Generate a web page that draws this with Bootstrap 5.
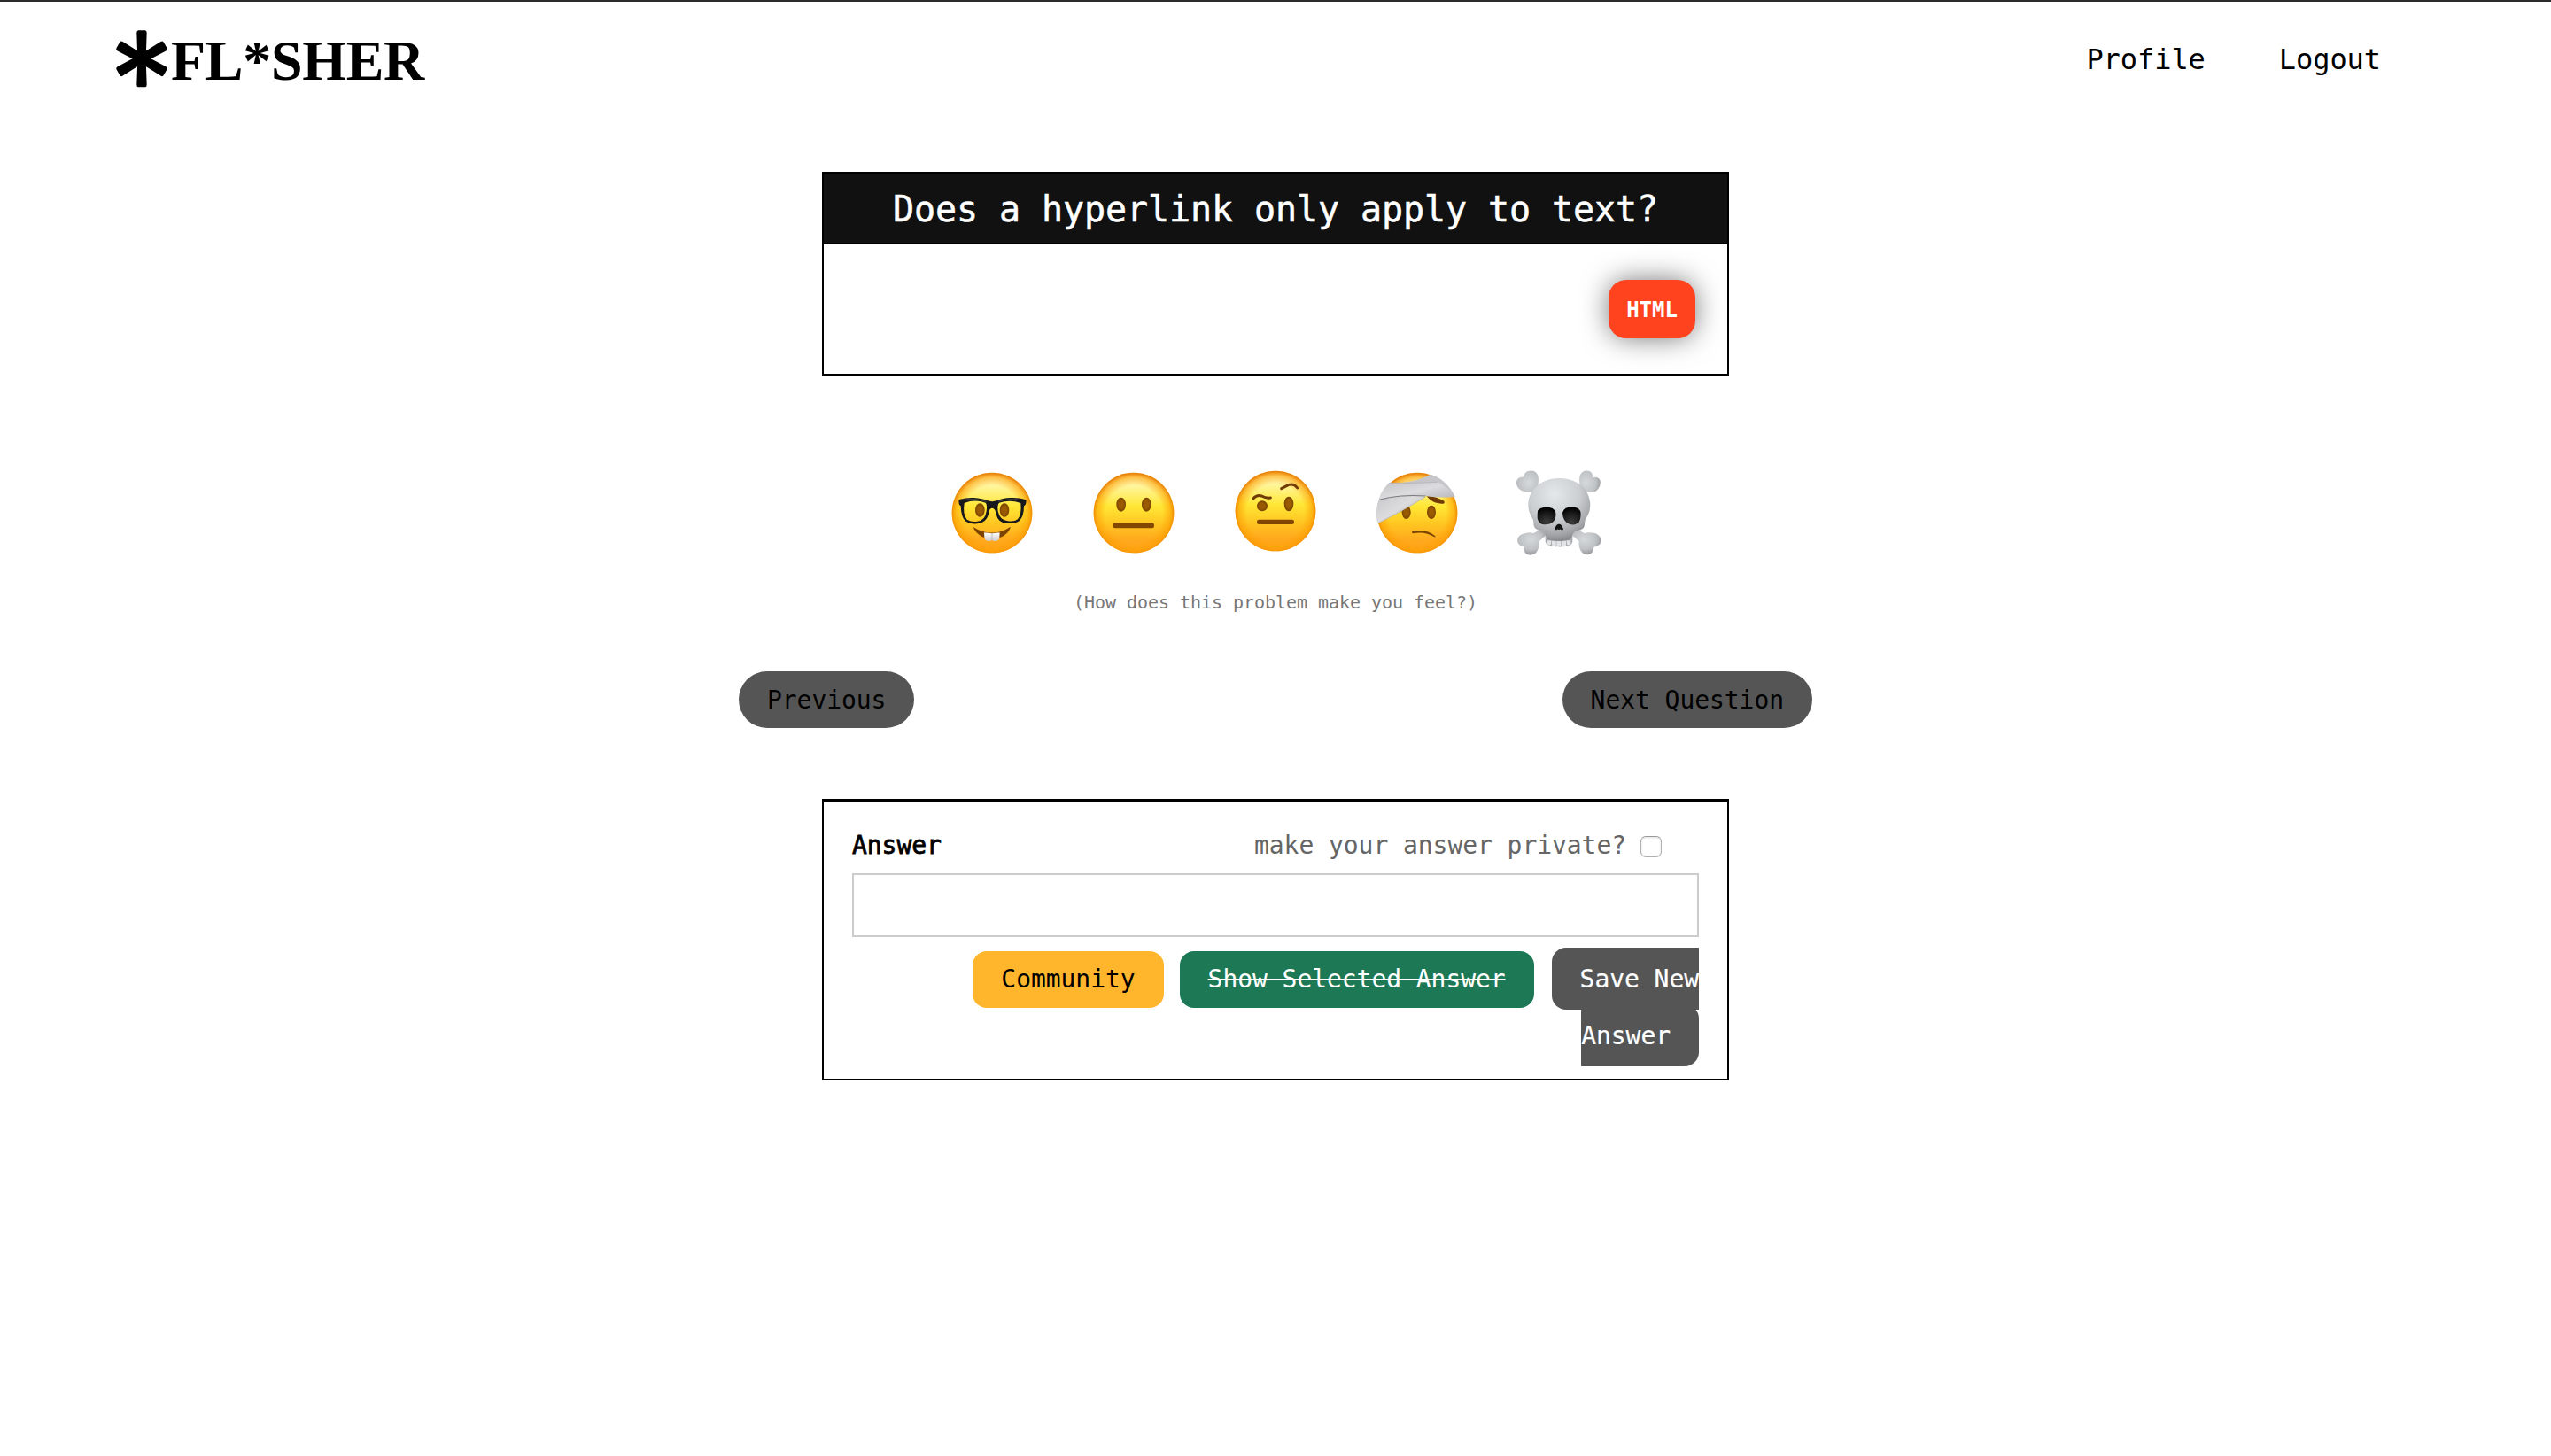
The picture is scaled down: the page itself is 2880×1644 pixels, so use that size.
<!DOCTYPE html>
<html lang="en">
<head>
<meta charset="utf-8">
<title>FL*SHER</title>
<meta name="viewport" content="width=device-width, initial-scale=1">
<link href="https://cdn.jsdelivr.net/npm/bootstrap@5.3.0/dist/css/bootstrap.min.css" rel="stylesheet">
<style>
  body { font-family: "DejaVu Sans Mono", monospace; font-size: 28px; letter-spacing: -.057px; color: #000; background: #fff; border-top: 2px solid #2b2b2e; }
  a { color: inherit; text-decoration: none; }
  .topbar { height: 128px; padding: 0 192px 0 130px; }
  .brand-name { font-family: "Liberation Serif", serif; font-weight: 700; font-size: 64px; line-height: 64px; letter-spacing: -.3px; margin-left: 3px; padding-top: 5px; }
  .brand-mark { width: 60px; height: 66px; }
  .site-links { font-size: 32px; letter-spacing: -.066px; gap: 83px; padding-top: 1px; }
  .panel { width: 1024px; border: 2px solid #000; }
  .question { margin-top: 64px; height: 230px; }
  .question h1 { margin: 0; height: 80px; background: #111; color: #fff; border-bottom: 2px solid #000; font-size: 40px; letter-spacing: -.082px; font-weight: 400; line-height: 80px; -webkit-text-stroke: .5px #fff; }
  .topic { width: 98px; height: 66px; margin: 40px 36px 0 0; border-radius: 20px; background: #fe431e; color: #fff; font-size: 24px; font-weight: 700; letter-spacing: -.05px; padding-top: 1px; box-shadow: 0 0 32px -2px rgba(0,0,0,.6); }
  .moods { margin-top: 105px; gap: 60px; }
  .moods svg { width: 100px; height: 100px; overflow: visible; }
  .hint { margin-top: 36px; font-size: 20px; letter-spacing: -.04px; line-height: 30px; color: #777; }
  .pager { width: 1212px; margin-top: 63px; }
  .pill { height: 64px; line-height: 65px; padding: 0 32px; border-radius: 32px; background: #555; }
  .answer { margin-top: 80px; height: 318px; border-top-width: 4px; padding: 24px 32px 0; }
  .answer-title { font-weight: 400; -webkit-text-stroke: .8px #000; }
  .private { color: #666; padding-right: 42px; gap: 16px; }
  .private input { appearance: none; width: 24px; height: 24px; margin: 2px 0 0; border: 1.5px solid #b0b0b0; border-top-color: #999; border-radius: 6px; background: #fff; box-shadow: inset 0 1px 3px rgba(0,0,0,.12); }
  .answer-row { height: 50px; }
  .answer-field { width: 956px; height: 72px; margin-top: 6px; border: 2px solid #ccc; border-radius: 0; }
  .actions { margin-top: 16px; text-align: right; line-height: 64px; }
  .actions a { border-radius: 16px; }
  .act { display: inline-block; height: 64px; padding: 0 32px; vertical-align: top; }
  .community { background: #ffb62c; margin-right: 18px; }
  .selected { background: #1c7855; color: #fff; text-decoration: line-through; margin-right: 20px; }
  .save { background: #555; color: #fff; padding: 19px 32px 18px; -webkit-text-stroke: .2px #fff; }
</style>
<script src="https://cdn.jsdelivr.net/npm/bootstrap@5.3.0/dist/js/bootstrap.bundle.min.js"></script>
</head>
<body>
<header class="topbar d-flex align-items-center justify-content-between pt-3">
  <a href="#" class="d-flex align-items-center mb-3">
    <svg class="brand-mark" viewBox="0 0 180 198"><g transform="translate(90 100)">
      <path id="arm" d="M-11-96H11Q17-96 17-88L14 0L17 88Q17 96 11 96H-11Q-17 96-17 88L-14 0L-17-88Q-17-96-11-96Z"/>
      <use href="#arm" transform="rotate(60) scale(1.06 .96)"/><use href="#arm" transform="rotate(-60) scale(1.06 .96)"/>
    </g></svg><span class="brand-name">FL*SHER</span>
  </a>
  <nav class="site-links d-flex mb-3"><a href="#">Profile</a><a href="#">Logout</a></nav>
</header>

<main class="d-flex flex-column align-items-center">
  <section class="panel question">
    <h1 class="text-center">Does a hyperlink only apply to text?</h1>
    <div class="d-flex justify-content-end"><span class="topic d-flex align-items-center justify-content-center">HTML</span></div>
  </section>

  <div class="moods d-flex">
    <svg viewBox="0 0 300 300" role="img" aria-label="Easy">
      <defs>
        <linearGradient id="skin" x1="0" y1="0" x2="0" y2="1"><stop offset="0" stop-color="#fffbc0"/><stop offset=".12" stop-color="#fff8b0"/><stop offset=".42" stop-color="#ffe735"/><stop offset=".65" stop-color="#ffc421"/><stop offset=".85" stop-color="#ffa81d"/><stop offset="1" stop-color="#ffa51a"/></linearGradient>
        <radialGradient id="rim" cx=".5" cy=".52" r=".51"><stop offset=".7" stop-color="#ff9d00" stop-opacity="0"/><stop offset=".9" stop-color="#fc9c00" stop-opacity=".6"/><stop offset="1" stop-color="#e87c00" stop-opacity=".95"/></radialGradient>
        <radialGradient id="eye"><stop offset=".5" stop-color="#9a5a00"/><stop offset="1" stop-color="#774100"/></radialGradient>
        <linearGradient id="wrap" x1="0" y1="0" x2="1" y2="1"><stop offset="0" stop-color="#c3c3c6"/><stop offset=".5" stop-color="#dcdcdf"/><stop offset="1" stop-color="#b4b4b8"/></linearGradient>
        <radialGradient id="bone" cx=".42" cy=".25" r=".75"><stop offset="0" stop-color="#e4e8eb"/><stop offset=".55" stop-color="#cbced1"/><stop offset=".85" stop-color="#a5a7aa"/><stop offset="1" stop-color="#898b8f"/></radialGradient>
        <radialGradient id="knob" cx=".45" cy=".4" r=".65"><stop offset="0" stop-color="#d6d9dc"/><stop offset=".6" stop-color="#bfc2c5"/><stop offset="1" stop-color="#8b8d91"/></radialGradient>
        <radialGradient id="socket" cx=".5" cy=".85" r=".8"><stop offset="0" stop-color="#3c3c3c"/><stop offset=".7" stop-color="#151515"/><stop offset="1" stop-color="#000"/></radialGradient>
        <linearGradient id="tooth" x1="0" y1="0" x2="0" y2="1"><stop offset="0" stop-color="#fff"/><stop offset="1" stop-color="#cdcdcd"/></linearGradient>
        <clipPath id="disc"><circle cx="150" cy="150" r="139"/></clipPath>
        <g id="face"><circle cx="150" cy="150" r="136" fill="url(#skin)"/><circle cx="150" cy="150" r="136" fill="url(#rim)"/></g>
      </defs>
      <use href="#face"/>
      <ellipse cx="109" cy="141" rx="16" ry="23" fill="url(#eye)"/><ellipse cx="192" cy="141" rx="16" ry="23" fill="url(#eye)"/>
      <path d="M86 198Q150 238 213 197Q208 216 186 230Q150 248 114 230Q92 216 86 198Z" fill="#7b4300"/>
      <path d="M123 217Q150 222 176 217L175 233Q173 246 160 246Q153 246 150 242Q146 246 140 246Q126 246 124 233Z" fill="url(#tooth)"/><path d="M150 219V243" stroke="#aaa" stroke-width="2"/>
      <path fill="#17181b" fill-rule="evenodd" d="M37 108Q36 105 42 104Q62 98 88 99Q118 101 135 109Q150 114 166 109Q184 100 213 99Q243 98 262 105Q267 106 266 110L264 121Q262 125 258 127Q258 163 242 178Q226 188 201 186Q170 184 164 155Q161 134 150 134Q140 134 138 155Q130 184 100 187Q74 189 59 178Q45 163 44 127Q39 124 38 119ZM56 117Q50 156 65 173Q80 182 100 179Q127 177 131 144Q134 122 128 116Q92 103 56 117ZM174 116Q167 123 170 145Q177 177 203 178Q226 181 237 172Q251 155 247 117Q210 104 174 116Z"/>
      <path d="M52 106Q96 99 132 113M170 112Q210 99 252 107" fill="none" stroke="#50545a" stroke-width="2"/>
    </svg>
    <svg viewBox="0 0 300 300" role="img" aria-label="Neutral">
      <use href="#face"/>
      <ellipse cx="107" cy="122" rx="16" ry="24" fill="url(#eye)"/><ellipse cx="193" cy="122" rx="16" ry="24" fill="url(#eye)"/>
      <rect x="79" y="184" width="140" height="18" rx="7" fill="#824800"/>
    </svg>
    <svg viewBox="0 6 300 300" role="img" aria-label="Doubtful">
      <use href="#face"/>
      <circle cx="105" cy="133" r="18" fill="url(#eye)"/><ellipse cx="195" cy="126" rx="16" ry="25" fill="url(#eye)"/>
      <path d="M75 107Q87 94 103 99Q118 107 133 105" fill="none" stroke="#713b06" stroke-width="9" stroke-linecap="round"/>
      <path d="M170 74Q183 67 195 61Q213 56 224 72" fill="none" stroke="#713b06" stroke-width="9" stroke-linecap="round"/>
      <rect x="87" y="179" width="126" height="16" rx="7" fill="#824800"/>
    </svg>
    <svg viewBox="0 0 300 300" role="img" aria-label="Hurt">
      <use href="#face"/>
      <ellipse cx="113" cy="148" rx="15" ry="23" fill="url(#eye)"/><ellipse cx="198" cy="148" rx="15" ry="23" fill="url(#eye)"/>
      <path d="M182 94Q207 92 241 110Q245 118 237 119Q204 121 182 94Z" fill="#713b06"/>
      <path d="M132 214Q178 202 211 229Q213 234 208 232Q176 212 137 220Q131 220 132 214Z" fill="#7b4300"/>
      <g clip-path="url(#disc)">
        <path d="M102 47Q142 46 195 20Q242 31 276 88L180 70Z" fill="#c6c6ca"/>
        <path d="M20 104Q9 130 12 180L18 185Q95 148 177 96L120 72L20 104Z" fill="url(#wrap)"/>
        <path d="M46 48Q130 50 220 45Q251 63 281 95Q230 101 180 93Q89 86 20 106Q26 68 46 48Z" fill="url(#wrap)"/>
        <path d="M20 106Q88 87 179 93" fill="none" stroke="#77777b" stroke-width="3"/>
        <path d="M46 49Q136 51 220 46M18 185Q95 148 177 96" fill="none" stroke="#aaaab0" stroke-width="2"/>
      </g>
    </svg>
    <svg viewBox="0 0 300 300" role="img" aria-label="Deadly">
      <path d="M76 71Q86 33 76 18Q64 3 43 10Q31 16 32 28Q8 28 6 46Q5 65 23 75Q40 82 54 79L80 108L99 83Z" fill="url(#knob)"/>
      <path d="M224 71Q214 33 224 18Q236 3 255 10Q266 16 263 31Q285 25 290 43Q292 66 274 77Q259 83 246 79L220 108L201 83Z" fill="url(#knob)"/>
      <path d="M91 205L64 219Q47 214 26 222Q7 230 10 248Q14 262 32 265Q29 286 45 292Q66 297 76 280Q85 267 83 247L110 223Z" fill="url(#knob)"/>
      <path d="M209 205L236 219Q253 214 274 220Q293 229 293 247Q290 262 268 266Q268 285 252 291Q233 295 223 277Q216 264 218 247L190 223Z" fill="url(#knob)"/>
      <path d="M104 218H196V247Q194 258 186 260Q180 264 174 261Q168 267 161 263Q153 268 146 263Q138 267 132 263Q124 266 118 260Q106 259 104 247Z" fill="#a9abae"/>
      <path d="M108 244h15v13q-7 5-13-1zM125 245h15v16q-7 4-13 0zM142 246h15v17q-8 3-15 0zM159 245h15v15q-7 5-14 1zM176 244h14v12q-6 6-13 1z" fill="#e2e4e6"/>
      <path d="M150 33C90 33 44 72 46 127Q46 146 56 163Q66 175 64 190Q66 207 87 210Q103 212 106 230Q110 244 124 243Q150 249 176 243Q190 244 194 230Q197 212 214 210Q236 207 237 190Q236 174 247 160Q256 144 256 124C255 68 210 33 150 33Z" fill="url(#bone)"/>
      <path d="M78 143Q86 131 109 131Q133 130 139 149Q142 171 127 184Q111 193 91 188Q75 180 77 157Z" fill="url(#socket)"/>
      <path d="M162 149Q169 130 194 130Q217 131 223 146Q226 169 218 181Q207 194 187 189Q162 180 162 149Z" fill="url(#socket)"/>
      <path d="M150 188Q158 187 164 202Q167 209 158 208Q154 203 150 208Q146 203 142 208Q133 209 137 200Q143 187 150 188Z" fill="#111"/>
    </svg>
  </div>
  <p class="hint mb-0">(How does this problem make you feel?)</p>

  <div class="pager d-flex justify-content-between">
    <a href="#" class="pill">Previous</a><a href="#" class="pill">Next Question</a>
  </div>

  <section class="panel answer">
    <div class="answer-row d-flex justify-content-between align-items-center">
      <label class="answer-title" for="reply">Answer</label>
      <label class="private d-flex align-items-center">make your answer private?<input type="checkbox"></label>
    </div>
    <input id="reply" type="text" class="answer-field d-block">
    <div class="actions"><a href="#" class="act community">Community</a><a href="#" class="act selected">Show Selected Answer</a><a href="#" class="save">Save New Answer</a></div>
  </section>
</main>
</body>
</html>
